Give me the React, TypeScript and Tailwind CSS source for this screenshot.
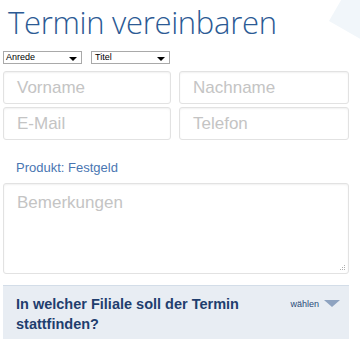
const App = () => {
    return (
        <div className="relative w-[360px] h-[339px] overflow-hidden bg-white font-['Liberation_Sans',Arial,sans-serif]">
            {/* faint decoration top right */}
            <div className="absolute right-[-40px] top-[-20px] w-[60px] h-[60px] rotate-[30deg] bg-[#f1f6fa]" />

            <div className="relative pl-[3px] w-[349px]">
                <h1 className="pl-[5px] pt-[4px] text-[31px] leading-[37px] font-['Open_Sans',sans-serif] font-light text-[#2c5a94] tracking-[-0.3px]">
                    Termin vereinbaren
                </h1>

                <div className="flex gap-[9px] mt-[10px]">
                    <div className="relative w-[79px] h-[13px] border border-[#a9a9a9] bg-white text-[9px] leading-[11px] pl-[2px] text-black">
                        Anrede
                        <span className="absolute right-[4px] top-[5px] w-0 h-0 border-l-[4px] border-r-[4px] border-t-[4px] border-l-transparent border-r-transparent border-t-black" />
                    </div>
                    <div className="relative w-[79px] h-[13px] border border-[#a9a9a9] bg-white text-[9px] leading-[11px] pl-[3px] text-black">
                        Titel
                        <span className="absolute right-[4px] top-[5px] w-0 h-0 border-l-[4px] border-r-[4px] border-t-[4px] border-l-transparent border-r-transparent border-t-black" />
                    </div>
                </div>

                <div className="grid grid-cols-[168px_170px] gap-x-[8px] gap-y-[3px] mt-[7px]">
                    {["Vorname", "Nachname", "E-Mail", "Telefon"].map((p) => (
                        <div
                            key={p}
                            className="h-[33px] rounded-[3px] border border-[#e2e2e2] shadow-[inset_0_1px_2px_rgba(0,0,0,0.06)] pl-[13px] flex items-center text-[17px] text-[#c4c4c4]"
                        >
                            {p}
                        </div>
                    ))}
                </div>

                <p className="mt-[20px] pl-[13px] text-[13px] leading-[16px] text-[#4a76b2]">Produkt: Festgeld</p>

                <div className="relative mt-[7px] h-[91px] rounded-[3px] border border-[#e2e2e2] shadow-[inset_0_1px_2px_rgba(0,0,0,0.06)] pl-[13px] pt-[6px] text-[17px] text-[#c4c4c4]">
                    Bemerkungen
                    <svg className="absolute right-[2px] bottom-[2px]" width="7" height="7" viewBox="0 0 7 7">
                        <rect x="5" y="1" width="1" height="1" fill="#b0b0b0" />
                        <rect x="3" y="3" width="1" height="1" fill="#b0b0b0" />
                        <rect x="5" y="3" width="1" height="1" fill="#b0b0b0" />
                        <rect x="1" y="5" width="1" height="1" fill="#b0b0b0" />
                        <rect x="3" y="5" width="1" height="1" fill="#b0b0b0" />
                        <rect x="5" y="5" width="1" height="1" fill="#b0b0b0" />
                    </svg>
                </div>

                <div className="mt-[11px] border-t border-[#d3dde8] bg-[#e8edf3] h-[60px] flex justify-between pl-[13px] pr-[9px] pt-[8px]">
                    <p className="text-[14.5px] leading-[20px] font-bold text-[#1f3e6e] w-[255px]">
                        In welcher Filiale soll der Termin stattfinden?
                    </p>
                    <div className="flex items-start gap-[5px] pt-[5px]">
                        <span className="text-[9px] leading-[10px] text-[#2a4a78]">wählen</span>
                        <span className="mt-[1px] w-0 h-0 border-l-[8px] border-r-[8px] border-t-[7px] border-l-transparent border-r-transparent border-t-[#8ea3c0]" />
                    </div>
                </div>
            </div>
        </div>
    );
};

export default App;
